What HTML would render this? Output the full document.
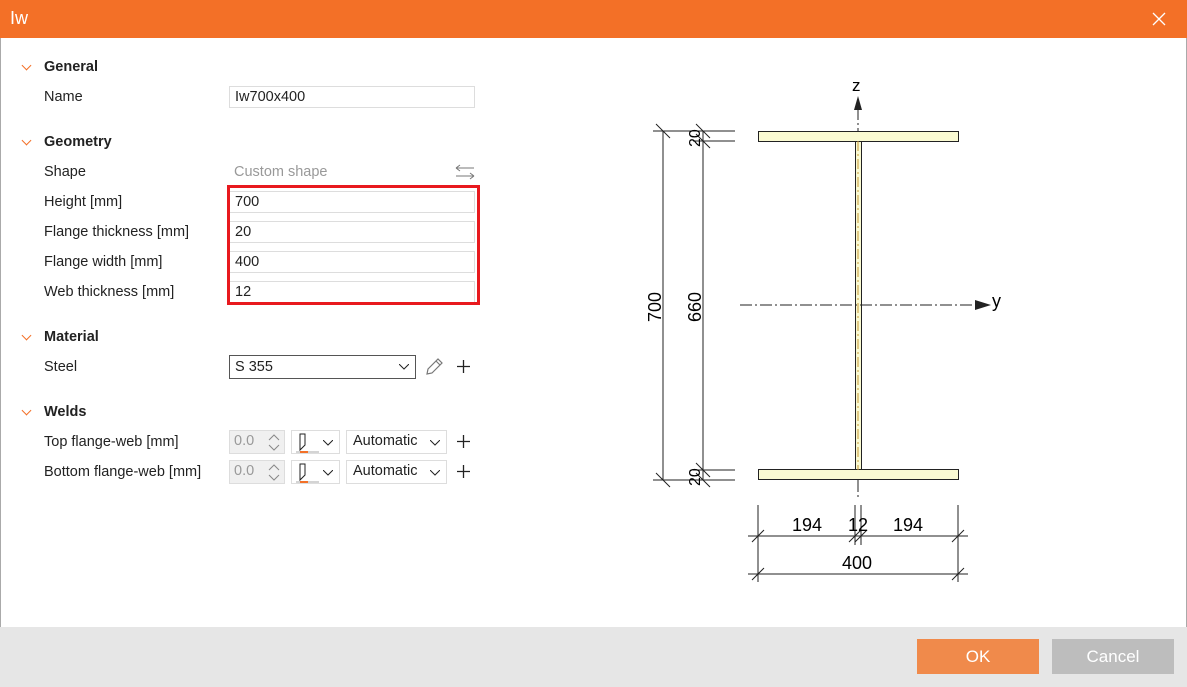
<!DOCTYPE html>
<html><head><meta charset="utf-8"><style>
body{margin:0;width:1187px;height:687px;position:relative;overflow:hidden;background:#fff;font-family:"Segoe UI","Liberation Sans",sans-serif;font-size:14.5px;color:#222}
.a{position:absolute}
.title{left:0;top:0;width:1187px;height:38px;background:#f37027;color:#fff;font-size:18px}
.lbl{left:44px;white-space:nowrap}
.h{left:44px;font-weight:bold}
.chev{left:23px;width:6px;height:6px;border-right:1.5px solid #f37027;border-bottom:1.5px solid #f37027;transform:rotate(45deg)}
.in{left:229px;width:246px;height:22px;border:1px solid #ddd;box-sizing:border-box;padding-left:5px;line-height:20px}
.btn{height:35px;line-height:35px;text-align:center;color:#fff;font-size:17px}
.dd{position:absolute;width:10px;height:6px}
</style></head><body>
<div class="a title"><span class="a" style="left:10px;top:8px">Iw</span>
<svg class="a" style="left:1152px;top:12px" width="14" height="14"><path d="M1 1L13 13M13 1L1 13" stroke="#fff" stroke-width="1.3"/></svg></div>
<div class="a" style="left:0;top:38px;width:1px;height:649px;background:#aaa"></div>
<div class="a" style="right:0;top:38px;width:1px;height:649px;background:#aaa"></div>

<div class="a chev" style="top:62px"></div><div class="a h" style="top:59px">General</div>
<div class="a lbl" style="top:89px">Name</div><div class="a in" style="top:86px">Iw700x400</div>

<div class="a chev" style="top:137px"></div><div class="a h" style="top:134px">Geometry</div>
<div class="a lbl" style="top:164px">Shape</div><div class="a" style="left:234px;top:164px;color:#999">Custom shape</div>
<svg class="a" style="left:454px;top:164px" width="22" height="16"><path d="M2 4H20M2 4L6 1M2 4L6 7M2 12H20M20 12L16 9M20 12L16 15" fill="none" stroke="#777"/></svg>
<div class="a lbl" style="top:194px">Height [mm]</div><div class="a in" style="top:191px">700</div>
<div class="a lbl" style="top:224px">Flange thickness [mm]</div><div class="a in" style="top:221px">20</div>
<div class="a lbl" style="top:254px">Flange width [mm]</div><div class="a in" style="top:251px">400</div>
<div class="a lbl" style="top:284px">Web thickness [mm]</div><div class="a in" style="top:281px">12</div>
<div class="a" style="left:227px;top:185px;width:247px;height:114px;border:3px solid #e8191e"></div>

<div class="a chev" style="top:332px"></div><div class="a h" style="top:329px">Material</div>
<div class="a lbl" style="top:359px">Steel</div>
<div class="a in" style="top:355px;width:187px;height:24px;border-color:#555;line-height:22px">S 355<svg class="dd" style="right:6px;top:8px"><path d="M0 0L5 5L10 0" fill="none" stroke="#222"/></svg></div>
<svg class="a" style="left:424px;top:357px" width="20" height="20"><path d="M3 17L4 12L14 2L18 6L8 16Z M12 4L16 8" fill="none" stroke="#777" stroke-width="1.2"/></svg>
<svg class="a" style="left:456px;top:359px" width="15" height="15"><path d="M7.5 1V14M1 7.5H14" stroke="#222" stroke-width="1.3"/></svg>

<div class="a chev" style="top:407px"></div><div class="a h" style="top:404px">Welds</div>
<div class="a lbl" style="top:434px">Top flange-web [mm]</div>
<div class="a lbl" style="top:464px">Bottom flange-web [mm]</div>
<div class="a" style="left:229px;top:430px;width:56px;height:24px;background:#f0f0f0;border:1px solid #ddd;box-sizing:border-box;color:#999;padding:2px 4px">0.0<svg class="a" style="left:38px;top:3px" width="12" height="17"><path d="M1 6L6 1L11 6M1 11L6 16L11 11" fill="none" stroke="#888"/></svg></div>
<div class="a" style="left:229px;top:460px;width:56px;height:24px;background:#f0f0f0;border:1px solid #ddd;box-sizing:border-box;color:#999;padding:2px 4px">0.0<svg class="a" style="left:38px;top:3px" width="12" height="17"><path d="M1 6L6 1L11 6M1 11L6 16L11 11" fill="none" stroke="#888"/></svg></div>
<div class="a" style="left:291px;top:430px;width:49px;height:24px;border:1px solid #ddd;box-sizing:border-box"><svg class="a" style="left:3px;top:1px" width="25" height="22"><path d="M5 2V18L10 13V2Z" fill="none" stroke="#222"/><path d="M1 20H24" stroke="#aaa"/><path d="M5 20H13" stroke="#f37027" stroke-width="2"/></svg><svg class="dd" style="left:31px;top:9px"><path d="M0 0L5 5L10 0" fill="none" stroke="#222"/></svg></div>
<div class="a" style="left:291px;top:460px;width:49px;height:24px;border:1px solid #ddd;box-sizing:border-box"><svg class="a" style="left:3px;top:1px" width="25" height="22"><path d="M5 2V18L10 13V2Z" fill="none" stroke="#222"/><path d="M1 20H24" stroke="#aaa"/><path d="M5 20H13" stroke="#f37027" stroke-width="2"/></svg><svg class="dd" style="left:31px;top:9px"><path d="M0 0L5 5L10 0" fill="none" stroke="#222"/></svg></div>
<div class="a" style="left:346px;top:430px;width:101px;height:24px;border:1px solid #ddd;box-sizing:border-box;padding:2px 6px">Automatic<svg class="dd" style="right:6px;top:9px"><path d="M0 0L5 5L10 0" fill="none" stroke="#222"/></svg></div>
<div class="a" style="left:346px;top:460px;width:101px;height:24px;border:1px solid #ddd;box-sizing:border-box;padding:2px 6px">Automatic<svg class="dd" style="right:6px;top:9px"><path d="M0 0L5 5L10 0" fill="none" stroke="#222"/></svg></div>
<svg class="a" style="left:456px;top:434px" width="15" height="15"><path d="M7.5 1V14M1 7.5H14" stroke="#222" stroke-width="1.3"/></svg>
<svg class="a" style="left:456px;top:464px" width="15" height="15"><path d="M7.5 1V14M1 7.5H14" stroke="#222" stroke-width="1.3"/></svg>

<svg class="a" style="left:0;top:0" width="1187" height="627" font-family="Liberation Sans,sans-serif" font-size="18">
<g stroke="#222" stroke-width="1">
<rect x="758.5" y="131.5" width="200" height="10" fill="#fafad2"/>
<rect x="758.5" y="469.5" width="200" height="10" fill="#fafad2"/>
<rect x="855.5" y="141.5" width="6" height="328" fill="#fafad2"/>
<path d="M858 108V131M858 480V500" stroke-dasharray="12 3 2 3"/>
<path d="M740 305H975" stroke-dasharray="12 3 2 3"/>
<path d="M653 131H735M653 480H735M693 141H735M693 470H735"/>
<path d="M663 131V480M703 131V480"/>
<path d="M656 124L670 138M656 473L670 487M696 124L710 138M696 134L710 148M696 463L710 477M696 473L710 487"/>
<path d="M758 505V582M958 505V582M855 505V545M861 505V545"/>
<path d="M748 536H968M748 574H968"/>
<path d="M752 542L764 530M952 542L964 530M849 542L861 530M855 542L867 530M752 580L764 568M952 580L964 568"/>
</g>
<path d="M858 141V470" stroke="#c89a3a" stroke-width="1" stroke-dasharray="10 3 2 3"/>
<path d="M975 300L991 305L975 310Z" fill="#222"/>
<path d="M854 110L858 96L862 110Z" fill="#222"/>
<text x="852" y="91" font-size="17">z</text>
<text x="992" y="307">y</text>
<text x="792" y="531">194</text><text x="848" y="531">12</text><text x="893" y="531">194</text>
<text x="842" y="569">400</text>
<text transform="translate(661 322) rotate(-90)">700</text>
<text transform="translate(701 322) rotate(-90)">660</text>
<text transform="translate(700 147) rotate(-90)" font-size="16">20</text>
<text transform="translate(700 486) rotate(-90)" font-size="16">20</text>
</svg>

<div class="a" style="left:0;top:627px;width:1187px;height:60px;background:#e6e6e6"></div>
<div class="a btn" style="left:917px;top:639px;width:122px;background:#f08a4b">OK</div>
<div class="a btn" style="left:1052px;top:639px;width:122px;background:#bdbdbd">Cancel</div>
</body></html>
